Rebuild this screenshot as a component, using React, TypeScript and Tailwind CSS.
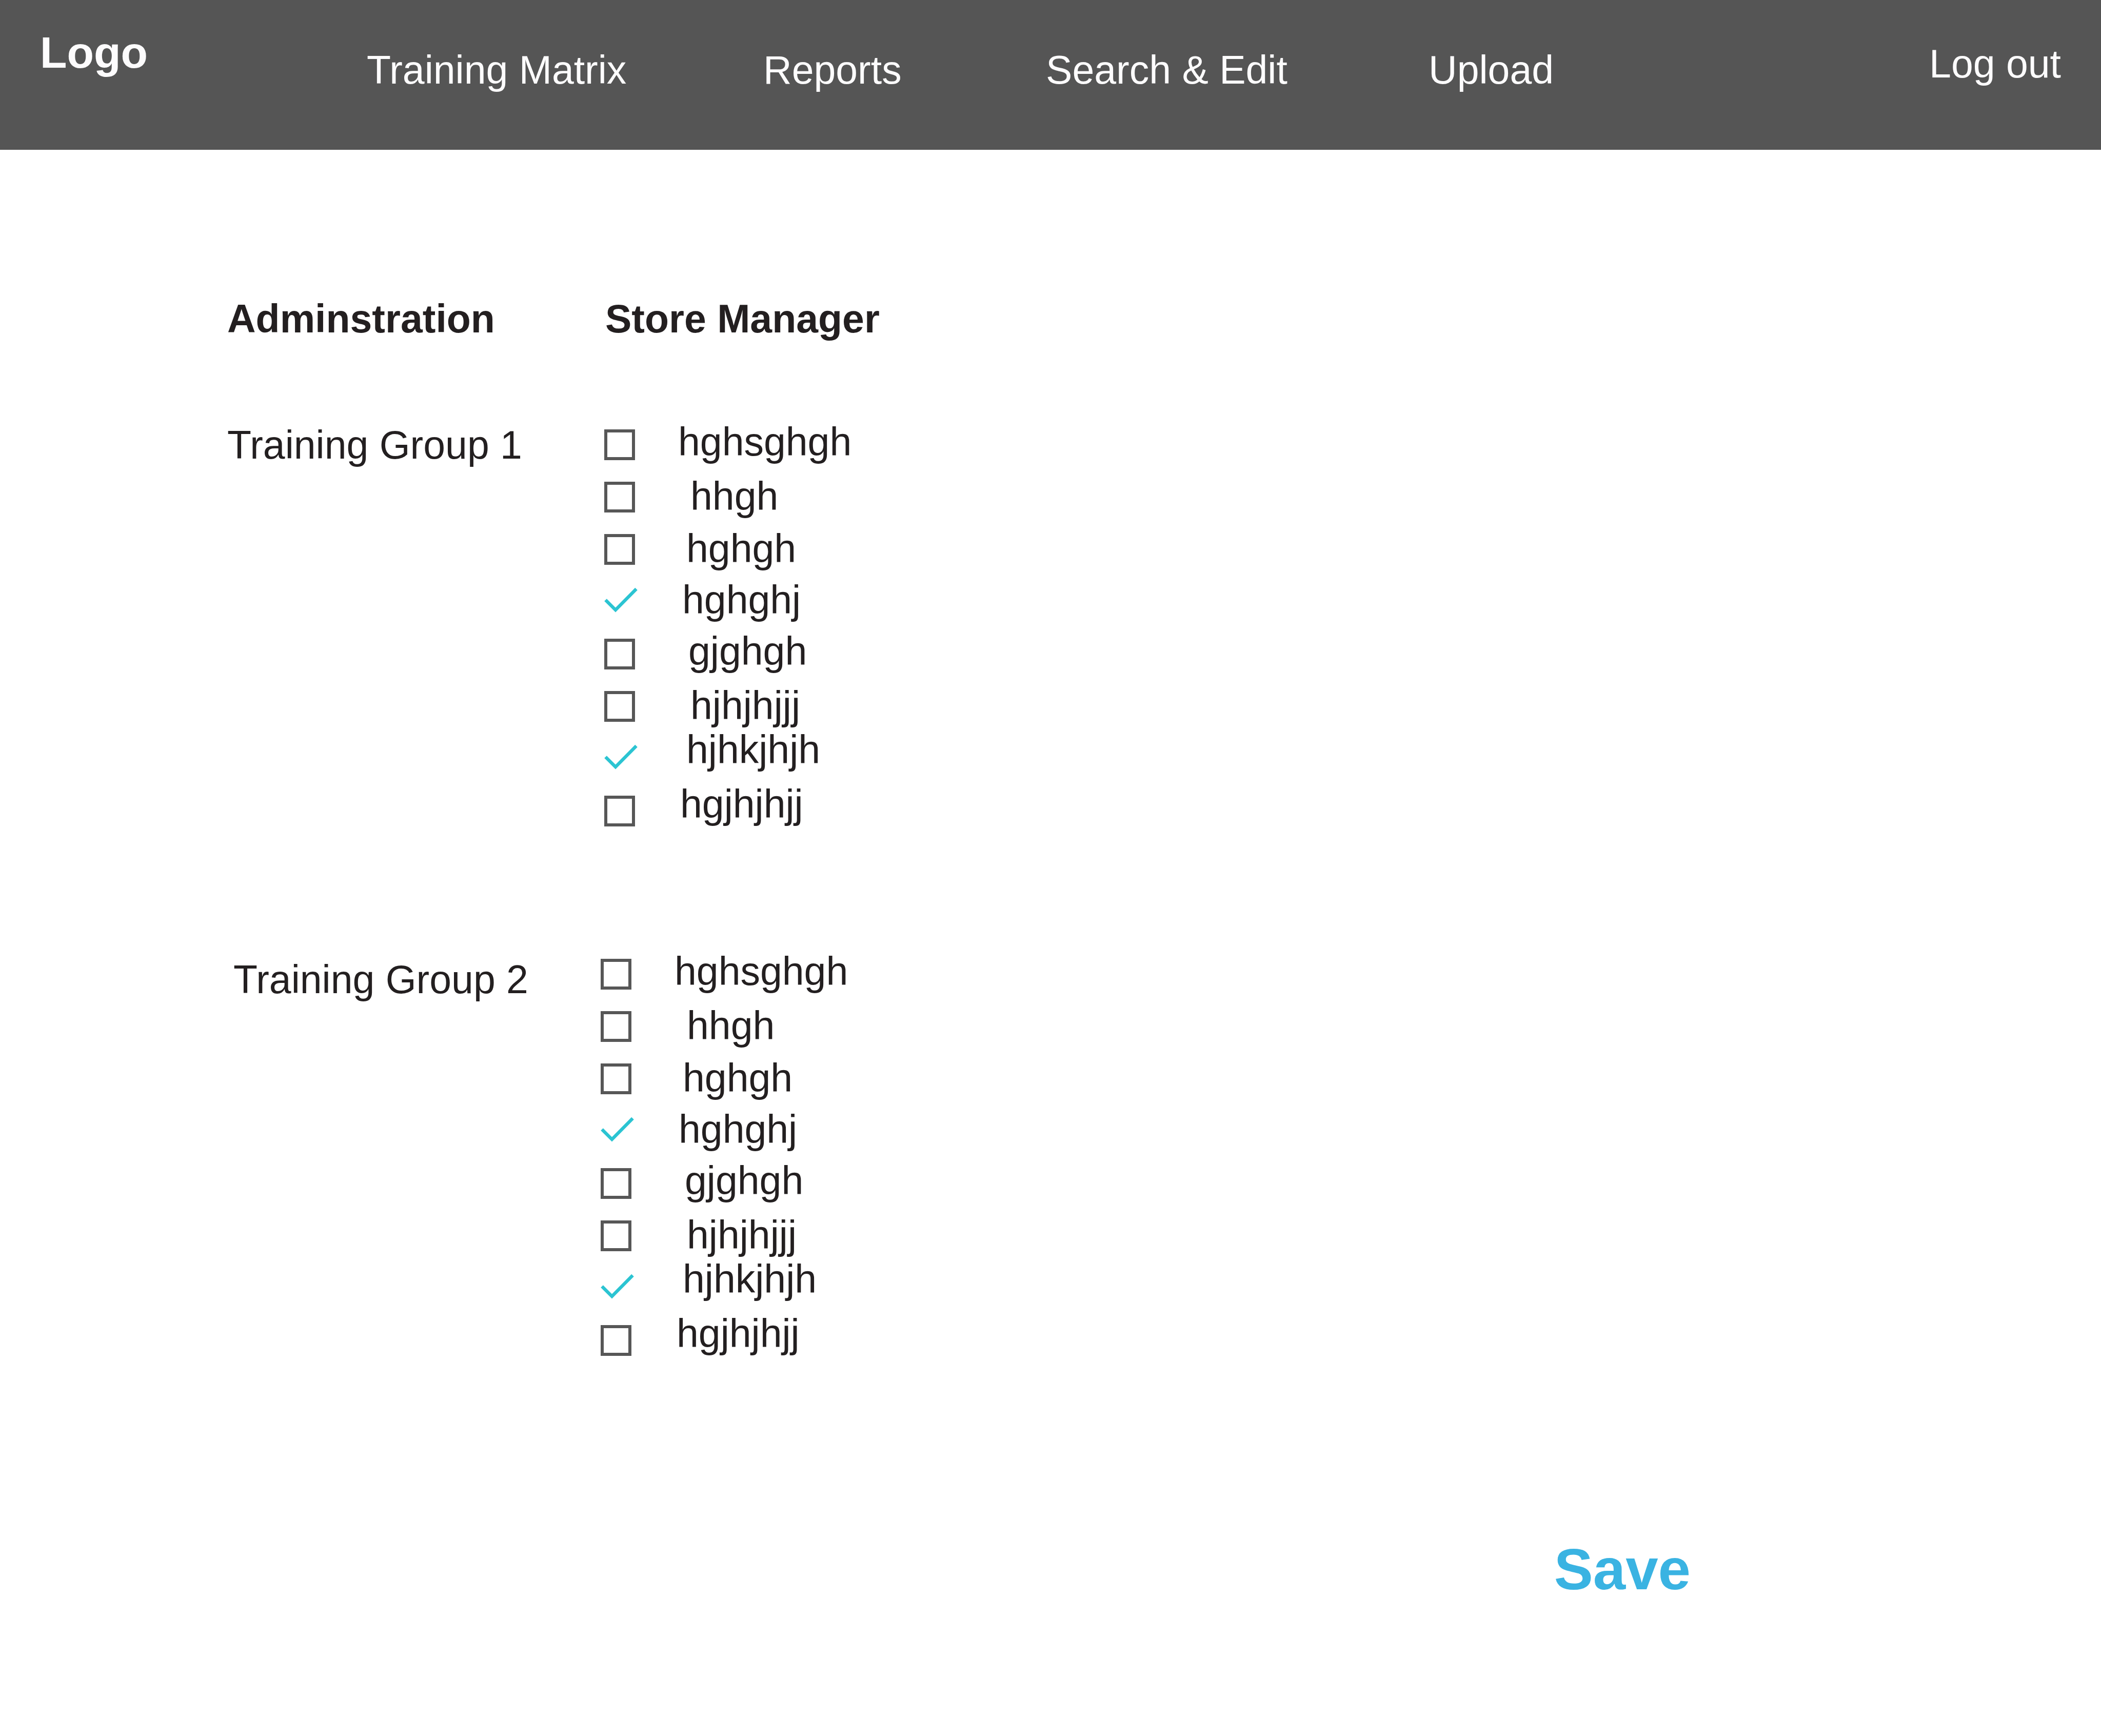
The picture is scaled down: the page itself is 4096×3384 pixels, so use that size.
import React from "react";

type Item = { name: string; checked?: boolean; label: string };

const items: Item[] = [
  { name: "hghsghgh", label: "ml-21 leading-12" },
  { name: "hhgh", label: "ml-27 leading-14" },
  { name: "hghgh", label: "ml-25 leading-14" },
  { name: "hghghj", checked: true, label: "ml-23 leading-13" },
  { name: "gjghgh", label: "ml-26 leading-12" },
  { name: "hjhjhjjj", label: "ml-27 leading-14" },
  { name: "hjhkjhjh", checked: true, label: "ml-25 leading-6" },
  { name: "hgjhjhjj", label: "ml-22 leading-8" },
];

function CheckRow({ id, item }: { id: string; item: Item }) {
  return (
    <li className="flex h-[102px] items-start">
      <span className="relative block size-[60px] shrink-0">
        <input
          id={id}
          type="checkbox"
          defaultChecked={item.checked}
          className="peer block size-[60px] cursor-pointer appearance-none border-6 border-[#575757] checked:border-transparent"
        />
        <svg
          viewBox="0 0 66 60"
          className="pointer-events-none absolute top-0 left-0 hidden h-[60px] w-[66px] peer-checked:block"
          fill="none"
          stroke="#2bc4d2"
          strokeWidth="6.5"
          aria-hidden="true"
        >
          <path d="M2.5 26.5 L22 46 L62.5 5" />
        </svg>
      </span>
      <label htmlFor={id} className={`cursor-pointer ${item.label}`}>
        {item.name}
      </label>
    </li>
  );
}

function CheckList({ prefix }: { prefix: string }) {
  return (
    <ul>
      {items.map((item) => (
        <CheckRow key={item.name} id={`${prefix}-${item.name}`} item={item} />
      ))}
    </ul>
  );
}

export default function App() {
  return (
    <div className="min-h-screen bg-white font-['Liberation_Sans',Arial,sans-serif] text-[77px] leading-[88px] text-[#231f20]">
      <header className="grid h-[292px] grid-cols-[637fr_3046fr_auto] items-start bg-[#555555] pt-[52px] pr-[78px] pl-[78px] text-[#fdfcfd]">
        <a href="#home" className="text-[86px] leading-[100px] font-bold">
          Logo
        </a>
        <nav className="grid grid-cols-[773fr_551fr_746fr_976fr] pt-10">
          <a href="#matrix">Training Matrix</a>
          <a href="#reports">Reports</a>
          <a href="#search">Search &amp; Edit</a>
          <a href="#upload">Upload</a>
        </nav>
        <a href="#logout" className="pt-7">
          Log out
        </a>
      </header>

      <main className="pt-[285px] pl-[443px]">
        <div className="grid grid-cols-[737px_1fr] font-bold">
          <h1>Adminstration</h1>
          <h2>Store Manager</h2>
        </div>

        <section
          aria-labelledby="group-1"
          className="mt-[172px] grid grid-cols-[735px_1fr] items-start"
        >
          <h3 id="group-1" className="leading-[60px]">
            Training Group 1
          </h3>
          <CheckList prefix="g1" />
        </section>

        <section
          aria-labelledby="group-2"
          className="mt-[216px] grid grid-cols-[716px_1fr] items-start pl-3"
        >
          <h3 id="group-2" className="pt-2.5 leading-[60px]">
            Training Group 2
          </h3>
          <CheckList prefix="g2" />
        </section>

        <div className="mt-[310px] flex justify-end pr-[800px]">
          <button
            type="button"
            className="cursor-pointer text-[114px] leading-[128px] font-bold text-[#3ab3e2]"
          >
            Save
          </button>
        </div>
      </main>
    </div>
  );
}
